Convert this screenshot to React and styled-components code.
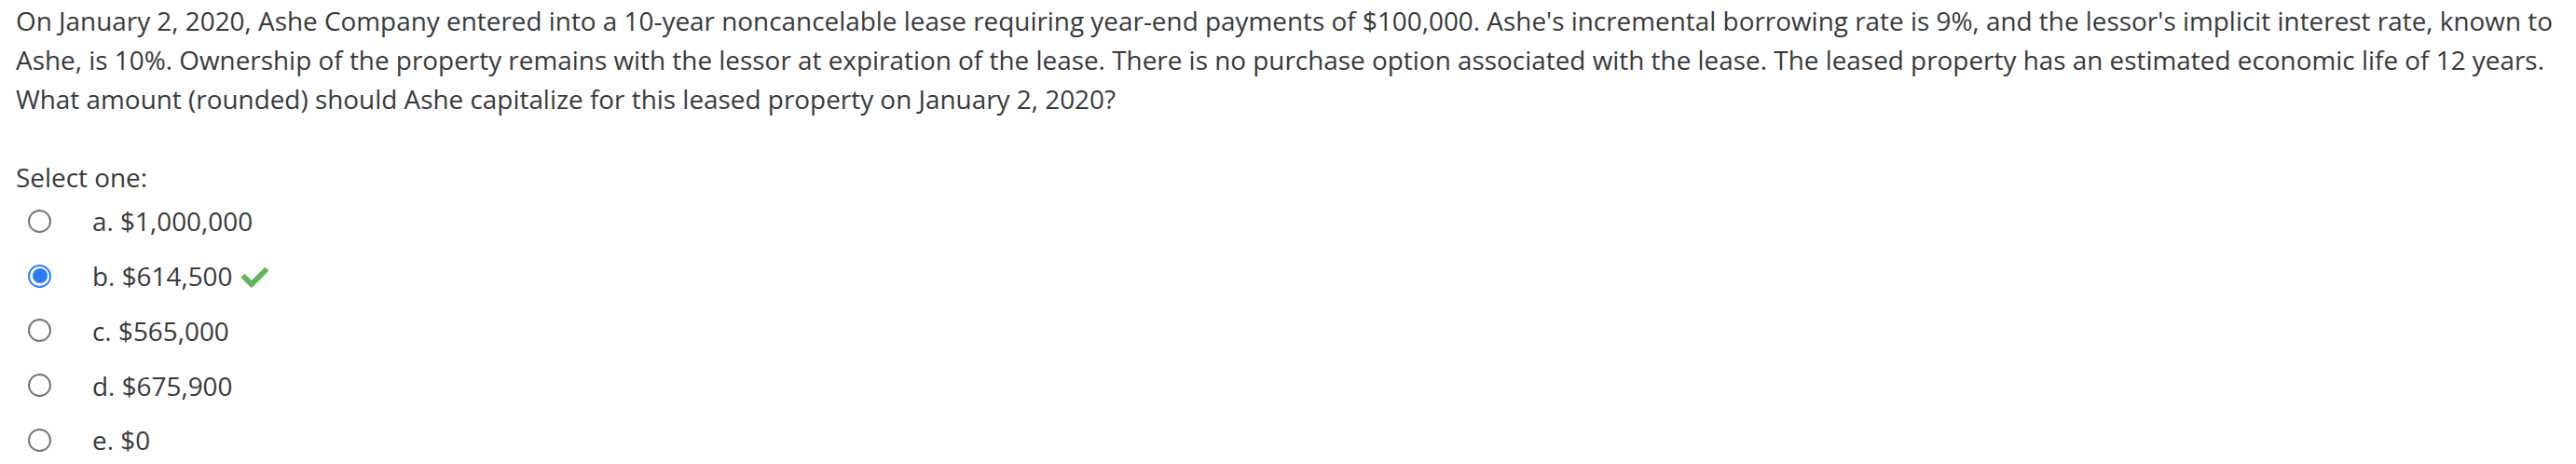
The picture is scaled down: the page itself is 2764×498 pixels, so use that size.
import React from "react";
import styled, { createGlobalStyle } from "styled-components";

const Global = createGlobalStyle`
  html, body { margin: 0; padding: 0; background: #fff; }
  body { font-family: "Open Sans", "Noto Sans", sans-serif; color: #373a3c; }
`;

const Page = styled.div`
  padding: 1px 8px 0 17px;
  font-size: 27.9px;
  line-height: 42px;
`;

const QText = styled.p`
  margin: 0;
`;

const Prompt = styled.div`
  margin-top: 42px;
`;

const Answers = styled.div`
  display: flex;
  flex-direction: column;
  margin-top: -3px;
`;

const Row = styled.label`
  display: flex;
  align-items: center;
  height: 58.75px;
`;

const RadioBox = styled.span`
  width: 82px;
  display: flex;
  align-items: center;
  padding-left: 13px;
  box-sizing: border-box;
`;

const Radio = styled.span`
  width: 25px;
  height: 25px;
  border-radius: 50%;
  box-sizing: border-box;
  border: 2px solid ${(p) => (p.$checked ? "#2b7cf6" : "#767676")};
  display: flex;
  align-items: center;
  justify-content: center;
  &::after {
    content: "";
    display: ${(p) => (p.$checked ? "block" : "none")};
    width: 16px;
    height: 16px;
    border-radius: 50%;
    background: #2b7cf6;
  }
`;

const Label = styled.span`
  display: inline-flex;
  align-items: center;
  gap: 10px;
`;

const CheckIcon = styled.svg`
  margin-top: 3px;
  flex: none;
`;

const Check = () => (
  <CheckIcon width="29" height="23" viewBox="0 0 512 400" aria-hidden="true">
    <path
      fill="#62b35a"
      d="M173.9 389.4L7.5 223c-10-10-10-26.2 0-36.2l36.2-36.2c10-10 26.2-10 36.2 0L192 262.7 432.1 22.6c10-10 26.2-10 36.2 0l36.2 36.2c10 10 10 26.2 0 36.2L210.1 389.4c-10 10-26.2 10-36.2 0z"
    />
  </CheckIcon>
);

const options = [
  { key: "a", text: "a. $1,000,000" },
  { key: "b", text: "b. $614,500", checked: true },
  { key: "c", text: "c. $565,000" },
  { key: "d", text: "d. $675,900" },
  { key: "e", text: "e. $0" },
];

export default function App() {
  return (
    <>
      <Global />
      <Page>
        <QText>
          On January 2, 2020, Ashe Company entered into a 10-year noncancelable lease requiring year-end payments of $100,000. Ashe's incremental borrowing rate is 9%, and the lessor's implicit interest rate, known to Ashe, is 10%. Ownership of the property remains with the lessor at expiration of the lease. There is no purchase option associated with the lease. The leased property has an estimated economic life of 12 years. What amount (rounded) should Ashe capitalize for this leased property on January 2, 2020?
        </QText>
        <Prompt>Select one:</Prompt>
        <Answers>
          {options.map((o) => (
            <Row key={o.key}>
              <RadioBox>
                <Radio $checked={o.checked} />
              </RadioBox>
              <Label>
                {o.text}
                {o.checked && <Check />}
              </Label>
            </Row>
          ))}
        </Answers>
      </Page>
    </>
  );
}
